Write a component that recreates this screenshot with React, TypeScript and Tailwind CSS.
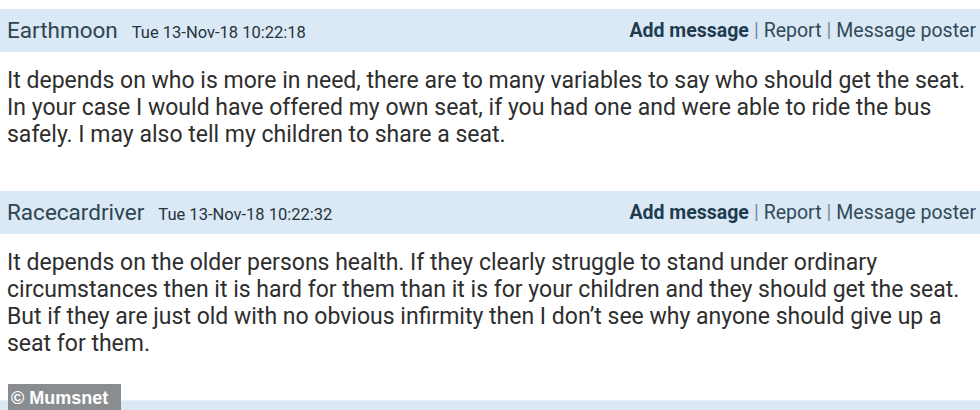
const posts = [
  {
    name: 'Earthmoon',
    date: 'Tue 13-Nov-18 10:22:18',
    lines: [
      'It depends on who is more in need, there are to many variables to say who should get the seat.',
      'In your case I would have offered my own seat, if you had one and were able to ride the bus',
      'safely. I may also tell my children to share a seat.',
    ],
  },
  {
    name: 'Racecardriver',
    date: 'Tue 13-Nov-18 10:22:32',
    lines: [
      'It depends on the older persons health. If they clearly struggle to stand under ordinary',
      'circumstances then it is hard for them than it is for your children and they should get the seat.',
      'But if they are just old with no obvious infirmity then I don\u2019t see why anyone should give up a',
      'seat for them.',
    ],
  },
];

function PostHeader({ name, date }: { name: string; date: string }) {
  return (
    <div className='h-[43px] bg-[#dbe8f5] flex items-center justify-between pl-[7px] pr-[4px]'>
      <div className='flex items-baseline gap-[14px]'>
        <span className='text-[22.5px] text-[#2c4652]'>{name}</span>
        <span className='text-[16.5px] text-[#26343b]'>{date}</span>
      </div>
      <div className='flex items-baseline text-[19.5px] text-[#2f4b5a]'>
        <a href='#' className='font-bold text-[#1d3c50]'>Add message</a>
        <span className='mx-[5px] text-[#7c8c96]'>|</span>
        <a href='#'>Report</a>
        <span className='mx-[5px] text-[#7c8c96]'>|</span>
        <a href='#'>Message poster</a>
      </div>
    </div>
  );
}

export default function App() {
  return (
    <div className="w-[980px] h-[410px] relative overflow-hidden bg-white pt-[9px] font-['Roboto',sans-serif]">
      {posts.map((post) => (
        <div key={post.name}>
          <PostHeader name={post.name} date={post.date} />
          <p className='px-[7px] pt-[15px] pb-[43px] text-[23px] leading-[27px] text-[#2e2e2e] whitespace-nowrap'>
            {post.lines.map((line, i) => (
              <span key={i} className='block'>{line}</span>
            ))}
          </p>
        </div>
      ))}
      <div className='h-[43px] bg-[#dbe8f5] border-t border-[#e8f0f7]' />

      <div className="absolute left-[8px] top-[384px] w-[113px] h-[30px] bg-[#8a8d90] pl-[3px] pt-[1px] text-white font-bold text-[18px] font-['Liberation_Sans',sans-serif]">
        © Mumsnet
      </div>
    </div>
  );
}
